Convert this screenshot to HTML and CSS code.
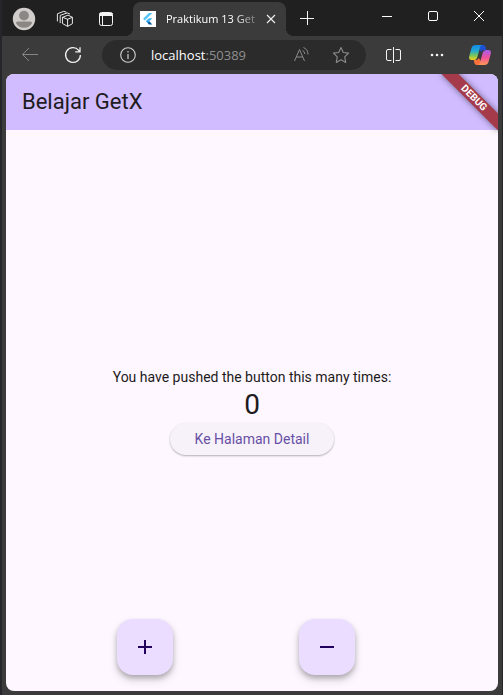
FILE: index.html
```html
<!DOCTYPE html>
<html lang="id">
<head>
<meta charset="utf-8">
<meta name="viewport" content="width=device-width, initial-scale=1">
<title>Praktikum 13 GetX</title>
<link rel="stylesheet" href="styles.css">
</head>
<body>
<div class="browser">
  <header class="titlebar">
    <div class="tools">
      <button class="icon-button" aria-label="Profile">
        <svg width="24" height="24" viewBox="0 0 24 24"><circle cx="12" cy="12" r="11.2" fill="#d0cdca"/><circle cx="12" cy="8.6" r="4.9" fill="#8b8784"/><path d="M4 16.2Q4 14.4 5.8 14.4H18.2Q20 14.4 20 16.2Q17.3 20.8 12 20.8T4 16.2Z" fill="#8b8784"/></svg>
      </button>
      <button class="icon-button" aria-label="Workspaces">
        <svg width="18" height="18" viewBox="0 0 18 18" fill="none" stroke="#e8e8e8" stroke-linejoin="round" stroke-linecap="round"><path d="M6.8 7.3 11.6 9.3 16.4 7.3V13.7L11.6 16.4 6.8 13.7ZM6.8 7.3 12 5.1 16.4 7.3M11.6 9.3V16.2"/><path d="M4.2 12.7V5.4L11.2 2.9 13.6 3.9M1.4 11V3.8L7.8 1.3 10 2.1"/></svg>
      </button>
      <button class="icon-button" aria-label="Tab actions">
        <svg width="16" height="16" viewBox="0 0 16 16" fill="none" stroke="#f4f4f4"><rect x="1.5" y="1.5" width="13" height="13" rx="2"/><path d="M1.5 3.5H14.5" stroke-width="3"/><path d="M4.5 4V14.5"/></svg>
      </button>
    </div>
    <div class="tab">
      <svg class="favicon" width="16" height="16" viewBox="0 0 16 16"><path fill="#fff" d="M0 0H16V16H0Z"/><path fill="#54c5f8" d="M8.9 2H12.3L4.8 9.5 3.1 7.8Z"/><path fill="#3bb5f3" d="M8.9 7.3H12.3L9.3 10.3 7.6 8.6Z"/><path fill="#29a2ef" d="M5.9 10.3 7.6 8.6 9.3 10.3 7.6 12Z"/><path fill="#01579b" d="M7.6 12 9.3 10.3 12.3 13.4H8.9Z"/></svg>
      <span class="tab-title">Praktikum 13 Get</span>
      <button class="icon-button tab-close" aria-label="Close tab">
        <svg width="10" height="10" viewBox="0 0 10 10" stroke="#f0f0f0" stroke-width="1.1"><path d="M1 1 9 9M9 1 1 9"/></svg>
      </button>
    </div>
    <button class="icon-button new-tab" aria-label="New tab">
      <svg width="16" height="16" viewBox="0 0 16 16" stroke="#f4f4f4"><path d="M1 8.5H15M8.5 1V15"/></svg>
    </button>
    <div class="window-controls">
      <button class="icon-button" aria-label="Minimize"><svg width="12" height="12" viewBox="0 0 12 12" stroke="#fff"><path d="M1 6.5H11"/></svg></button>
      <button class="icon-button" aria-label="Maximize"><svg width="12" height="12" viewBox="0 0 12 12" fill="none" stroke="#fff"><rect x="1.5" y="1.5" width="9" height="9" rx="1.5"/></svg></button>
      <button class="icon-button" aria-label="Close"><svg width="12" height="12" viewBox="0 0 12 12" stroke="#fff"><path d="M1 1 11 11M11 1 1 11"/></svg></button>
    </div>
  </header>
  <nav class="toolbar" aria-label="Browser toolbar">
    <button class="icon-button" aria-label="Back"><svg width="18" height="18" viewBox="0 0 18 18" fill="none" stroke="#858585"><path d="M17 8.5H1.5M8 2 1.5 8.5 8 15"/></svg></button>
    <button class="icon-button" aria-label="Refresh"><svg width="18" height="18" viewBox="0 0 18 18" fill="none" stroke="#f0f0f0" stroke-width="1.3"><path d="M16.4 9A7.4 7.4 0 1 1 14.7 4.3L15.8 5.7M16 1.2V5.9H11.2"/></svg></button>
    <div class="address">
      <svg width="16" height="16" viewBox="0 0 16 16" fill="none" stroke="#d0d0d0"><circle cx="8" cy="8" r="7.3" stroke-width="1.1"/><path d="M8 7V12M8 4V5.5" stroke-width="1.2"/></svg>
      <div class="url" role="textbox" aria-label="Address" contenteditable="true" spellcheck="false">localhost<span class="port">:50389</span></div>
      <button class="icon-button" aria-label="Read aloud"><svg width="17" height="18" viewBox="0 0 17 18" fill="none" stroke="#8b8b8b"><path d="M1.5 15 6.5 3.5 11.5 15M3.2 11H9.8"/><path d="M9.5 4.5Q11.8 5.5 11.8 8M10.5 1.5Q15 3.5 15 8.5"/></svg></button>
      <button class="icon-button" aria-label="Add to favorites"><svg width="18" height="18" viewBox="0 0 18 18" fill="none" stroke="#8b8b8b" stroke-width="1.1" stroke-linejoin="round"><path d="M9 1.5 11.3 6.5 16.6 7.1 12.7 10.9 13.7 16.4 9 13.7 4.3 16.4 5.3 10.9 1.4 7.1 6.7 6.5Z"/></svg></button>
    </div>
    <button class="icon-button" aria-label="Split screen"><svg width="16" height="16" viewBox="0 0 16 16" fill="none" stroke="#f4f4f4"><path d="M5.5 2.5H2Q.5 2.5 .5 4V12Q.5 13.5 2 13.5H5.5M9.5 2.5H13Q14.5 2.5 14.5 4V12Q14.5 13.5 13 13.5H9.5M7.5 0V16"/></svg></button>
    <button class="icon-button" aria-label="Settings and more"><svg width="16" height="16" viewBox="0 0 16 16" fill="#f4f4f4"><circle cx="3" cy="8" r="1.3"/><circle cx="8" cy="8" r="1.3"/><circle cx="13" cy="8" r="1.3"/></svg></button>
    <button class="icon-button" aria-label="Copilot">
      <svg width="22" height="20" viewBox="0 0 22 20">
        <defs>
          <linearGradient id="cool" x1="0" y1="0" x2="0" y2="1"><stop offset="0" stop-color="#1489e8"/><stop offset=".4" stop-color="#23a9d0"/><stop offset=".7" stop-color="#7bc65a"/><stop offset="1" stop-color="#f5d21c"/></linearGradient>
          <linearGradient id="warm" x1="0" y1="0" x2="0" y2="1"><stop offset="0" stop-color="#a35bea"/><stop offset=".5" stop-color="#ee529e"/><stop offset="1" stop-color="#ff9a51"/></linearGradient>
        </defs>
        <path d="M11 0H14.4Q16 0 16.6 2L17.3 5H14.8Q12.8 5 12.2 7L9 2Q9.6 0 11 0Z" fill="#1c4fd1"/>
        <path d="M11 20H7.6Q6 20 5.4 18L4.7 15H7.2Q9.2 15 9.8 13L13 18Q12.4 20 11 20Z" fill="#f7713b"/>
        <path d="M6.5 0H13Q11.6 .4 11 2.5L8.2 12.5Q7.4 15 5 15H2.5Q-.8 15 .3 11L2.5 3Q3.4 0 6.5 0Z" fill="url(#cool)"/>
        <path d="M15.5 20H9Q10.4 19.6 11 17.5L13.8 7.5Q14.6 5 17 5H19.5Q22.8 5 21.7 9L19.5 17Q18.6 20 15.5 20Z" fill="url(#warm)"/>
      </svg>
    </button>
  </nav>
  <div class="page">
    <header class="appbar"><h1>Belajar GetX</h1></header>
    <main class="content">
      <p class="message">You have pushed the button this many times:</p>
      <output class="count">0</output>
      <button class="detail-button">Ke Halaman Detail</button>
    </main>
    <div class="fabs">
      <button class="fab" aria-label="Increment"><svg width="24" height="24" viewBox="0 0 24 24" fill="#21005d"><path d="M19 13H13V19H11V13H5V11H11V5H13V11H19Z"/></svg></button>
      <button class="fab" aria-label="Decrement"><svg width="24" height="24" viewBox="0 0 24 24" fill="#21005d"><path d="M19 13H5V11H19Z"/></svg></button>
    </div>
    <div class="debug">DEBUG</div>
  </div>
</div>
</body>
</html>
```

FILE: styles.css
```css
* {
  box-sizing: border-box;
}

body {
  margin: 0;
  background: #252629;
  font-family: Roboto, sans-serif;
}

.browser {
  display: flex;
  flex-direction: column;
  min-height: 100vh;
  margin: 0 1px 0 2px;
  padding-bottom: 4px;
  background: #3b3b3b;
}

.icon-button {
  display: flex;
  align-items: center;
  justify-content: center;
  flex: none;
  padding: 0;
  border: 0;
  background: none;
}

.titlebar {
  display: flex;
  height: 36px;
  background: #202020;
}

.tools {
  display: flex;
  align-items: center;
  gap: 17px;
  padding: 2px 15px 0 10px;
}

.tools .icon-button {
  width: 24px;
}

.tab {
  position: relative;
  display: flex;
  align-items: center;
  flex: 0 1 153px;
  min-width: 0;
  margin-top: 2px;
  padding: 0 10px 0 7px;
  border-radius: 8px 8px 0 0;
  background: #3b3b3b;
}

.tab::before,
.tab::after {
  content: "";
  position: absolute;
  bottom: 0;
  width: 8px;
  height: 8px;
}

.tab::before {
  right: 100%;
  background: radial-gradient(circle at 0 0, #202020 8px, #3b3b3b 8px);
}

.tab::after {
  left: 100%;
  background: radial-gradient(circle at 100% 0, #202020 8px, #3b3b3b 8px);
}

.favicon {
  flex: none;
}

.tab-title {
  flex: 1;
  margin: 0 8px 0 10px;
  color: #fff;
  font: 11px/18px "Open Sans", sans-serif;
  white-space: nowrap;
  mask-image: linear-gradient(to right, #000 75%, rgb(0 0 0 / 20%));
}

.new-tab {
  margin-left: 13px;
}

.window-controls {
  display: flex;
  margin-left: auto;
}

.window-controls .icon-button {
  width: 46px;
  height: 32px;
}

.toolbar {
  display: flex;
  align-items: center;
  height: 38px;
  padding: 0 10px 0 16px;
}

.toolbar > .icon-button {
  width: 24px;
}

.toolbar > .icon-button + .icon-button {
  margin-left: 19px;
}

.address {
  display: flex;
  align-items: center;
  flex: 1;
  min-width: 0;
  height: 30px;
  margin: 0 16px 0 17px;
  padding: 0 16px 0 18px;
  border-radius: 15px;
  background: #2b2b2b;
}

.url {
  flex: 1;
  min-width: 0;
  margin-left: 15px;
  overflow: hidden;
  color: #fff;
  font: 13px/20px "Open Sans", sans-serif;
  white-space: nowrap;
}

.port {
  color: #8f8f8f;
}

.address .icon-button + .icon-button {
  margin-left: 22px;
}

.page {
  position: relative;
  display: flex;
  flex-direction: column;
  flex: 1;
  margin: 0 4px;
  overflow: hidden;
  border-radius: 8px;
  background: #fef7ff;
  color: #1d1b20;
}

.appbar {
  display: flex;
  align-items: center;
  height: 56px;
  padding: 0 16px;
  background: #d0bcff;
}

.appbar h1 {
  margin: 0;
  font-size: 22px;
  font-weight: 400;
  line-height: 28px;
}

.content {
  display: flex;
  flex-direction: column;
  align-items: center;
  justify-content: center;
  flex: 1;
}

.message {
  margin: 0;
  font-size: 14px;
  line-height: 20px;
}

.count {
  font-size: 28px;
  line-height: 36px;
}

.detail-button {
  height: 32px;
  padding: 0 25px;
  border: 0;
  border-radius: 16px;
  background: #f7f2fa;
  box-shadow: 0 1px 2px rgb(0 0 0 / 30%);
  color: #6750a4;
  font: 400 14px/20px Roboto, sans-serif;
}

.fabs {
  position: absolute;
  right: 16px;
  bottom: 16px;
  display: flex;
  justify-content: space-evenly;
  width: 100%;
}

.fab {
  display: flex;
  align-items: center;
  justify-content: center;
  width: 56px;
  height: 56px;
  padding: 0;
  border: 0;
  border-radius: 16px;
  background: #eaddff;
  box-shadow: 0 3px 5px rgb(0 0 0 / 22%), 0 5px 10px rgb(0 0 0 / 14%);
}

.debug {
  position: absolute;
  top: 18px;
  right: -16px;
  width: 80px;
  background: #a53b4a;
  box-shadow: 0 0 6px rgb(0 0 0 / 50%);
  color: #fff;
  font-size: 10px;
  font-weight: 700;
  line-height: 12px;
  text-align: center;
  transform: rotate(45deg);
}
```
